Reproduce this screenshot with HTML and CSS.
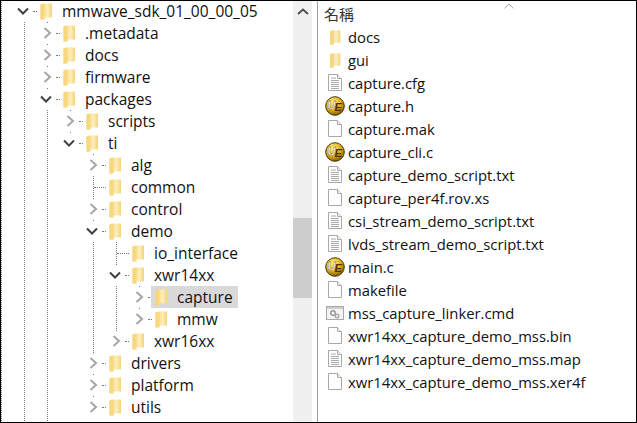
FILE: index.html
```html
<!DOCTYPE html>
<html lang="zh-Hant">
<head>
<meta charset="utf-8">
<title>mmwave_sdk</title>
<link rel="stylesheet" href="styles.css">
</head>
<body>
<svg width="0" height="0" class="defs">
  <defs>
    <linearGradient id="fg" x1="0" x2="1" y1="0" y2="0">
      <stop offset="0" stop-color="#f4d271"/><stop offset=".25" stop-color="#f8dc88"/><stop offset=".6" stop-color="#fdeebb"/><stop offset="1" stop-color="#f5d47a"/>
    </linearGradient>
    <radialGradient id="ue" cx=".4" cy=".3" r=".8">
      <stop offset="0" stop-color="#fff07a"/><stop offset=".55" stop-color="#d9a91c"/><stop offset="1" stop-color="#5c4300"/>
    </radialGradient>
    <symbol id="folder" viewBox="0 0 14 20">
      <path d="M1.500 3.500 4 2.500h9v14H5.500v2h-4z" fill="url(#fg)"/>
      <path d="M1.500 3.500v15h4v-15z" fill="#f6d77f" opacity=".7"/>
    </symbol>
    <symbol id="open" viewBox="0 0 12 12"><path d="M1 3.500 6 8.500l5-5" fill="none" stroke="#404040" stroke-width="2"/></symbol>
    <symbol id="closed" viewBox="0 0 12 12"><path d="M4.500 1 10 6l-5.500 5" fill="none" stroke="#a6a6a6" stroke-width="2"/></symbol>
    <symbol id="doc" viewBox="0 0 14 17"><path d="M.5.5h9l4 4v12H.5z" fill="#fff" stroke="#a8a8a8"/><path d="M9.500.5v4h4" fill="#f2f2f2" stroke="#a8a8a8"/></symbol>
    <symbol id="txt" viewBox="0 0 14 17"><path d="M.5.5h9l4 4v12H.5z" fill="#fff" stroke="#a8a8a8"/><path d="M9.500.5v4h4" fill="#f2f2f2" stroke="#a8a8a8"/><path d="M3 4h5M3 6.500h8M3 8.500h8M3 10.500h8M3 12.500h8M3 14.500h8" stroke="#aaa"/></symbol>
    <symbol id="uedit" viewBox="0 0 20 20"><circle cx="10" cy="10" r="9.300" fill="url(#ue)" stroke="#4a3800"/><text x="2.500" y="12.500" class="ue-u">U</text><text x="9.500" y="15" class="ue-e">E</text></symbol>
    <symbol id="cmd" viewBox="0 0 18 14"><rect x=".5" y=".5" width="17" height="13" fill="#f4f4f4" stroke="#a8a8a8"/><rect x="1" y="1" width="16" height="2" fill="#cfcfcf"/><circle cx="7" cy="7" r="2.300" fill="none" stroke="#999" stroke-width="1.400"/><circle cx="11" cy="10" r="1.800" fill="none" stroke="#aaa" stroke-width="1.400"/></symbol>
  </defs>
</svg>
<main class="window">
  <nav class="tree-pane">
    <div class="tree">
      <svg class="guides" width="293" height="421">
        <path d="M1.500 0V421M24.500 22V421M47.500 22V421M70.500 110V143M93.500 154V407M116.500 242V341M139.500 286V319" />
      </svg>
      <div class="row l0"><svg class="chev"><use href="#open"/></svg><i class="stub"></i><svg class="fld"><use href="#folder"/></svg><span class="lbl">mmwave_sdk_01_00_00_05</span></div>
      <div class="row l1"><svg class="chev"><use href="#closed"/></svg><i class="stub"></i><svg class="fld"><use href="#folder"/></svg><span class="lbl">.metadata</span></div>
      <div class="row l1"><svg class="chev"><use href="#closed"/></svg><i class="stub"></i><svg class="fld"><use href="#folder"/></svg><span class="lbl">docs</span></div>
      <div class="row l1"><svg class="chev"><use href="#closed"/></svg><i class="stub"></i><svg class="fld"><use href="#folder"/></svg><span class="lbl">firmware</span></div>
      <div class="row l1"><svg class="chev"><use href="#open"/></svg><i class="stub"></i><svg class="fld"><use href="#folder"/></svg><span class="lbl">packages</span></div>
      <div class="row l2"><svg class="chev"><use href="#closed"/></svg><i class="stub"></i><svg class="fld"><use href="#folder"/></svg><span class="lbl">scripts</span></div>
      <div class="row l2"><svg class="chev"><use href="#open"/></svg><i class="stub"></i><svg class="fld"><use href="#folder"/></svg><span class="lbl">ti</span></div>
      <div class="row l3"><svg class="chev"><use href="#closed"/></svg><i class="stub"></i><svg class="fld"><use href="#folder"/></svg><span class="lbl">alg</span></div>
      <div class="row l3"><span class="nochev"></span><i class="stub long"></i><svg class="fld"><use href="#folder"/></svg><span class="lbl">common</span></div>
      <div class="row l3"><svg class="chev"><use href="#closed"/></svg><i class="stub"></i><svg class="fld"><use href="#folder"/></svg><span class="lbl">control</span></div>
      <div class="row l3"><svg class="chev"><use href="#open"/></svg><i class="stub"></i><svg class="fld"><use href="#folder"/></svg><span class="lbl">demo</span></div>
      <div class="row l4"><span class="nochev"></span><i class="stub long"></i><svg class="fld"><use href="#folder"/></svg><span class="lbl">io_interface</span></div>
      <div class="row l4"><svg class="chev"><use href="#open"/></svg><i class="stub"></i><svg class="fld"><use href="#folder"/></svg><span class="lbl">xwr14xx</span></div>
      <div class="row l5"><svg class="chev"><use href="#closed"/></svg><i class="stub"></i><svg class="fld sel-fld"><use href="#folder"/></svg><span class="lbl sel">capture</span></div>
      <div class="row l5"><svg class="chev"><use href="#closed"/></svg><i class="stub"></i><svg class="fld"><use href="#folder"/></svg><span class="lbl">mmw</span></div>
      <div class="row l4"><svg class="chev"><use href="#closed"/></svg><i class="stub"></i><svg class="fld"><use href="#folder"/></svg><span class="lbl">xwr16xx</span></div>
      <div class="row l3"><svg class="chev"><use href="#closed"/></svg><i class="stub"></i><svg class="fld"><use href="#folder"/></svg><span class="lbl">drivers</span></div>
      <div class="row l3"><svg class="chev"><use href="#closed"/></svg><i class="stub"></i><svg class="fld"><use href="#folder"/></svg><span class="lbl">platform</span></div>
      <div class="row l3"><svg class="chev"><use href="#closed"/></svg><i class="stub"></i><svg class="fld"><use href="#folder"/></svg><span class="lbl">utils</span></div>
    </div>
    <div class="scrollbar">
      <svg class="up" width="12" height="7" viewBox="0 0 12 7"><path d="M1 6 6 1.500 11 6" fill="none" stroke="#505050" stroke-width="2"/></svg>
      <div class="thumb"></div>
    </div>
  </nav>
  <section class="list-pane">
    <header class="head"><span class="name-col">名稱</span><svg class="sort" width="10" height="6" viewBox="0 0 10 6"><path d="M.5 5.500 5 1l4.500 4.500" fill="none" stroke="#a8a8a8"/></svg></header>
    <ul class="files">
      <li class="file"><span class="ico"><svg class="ff"><use href="#folder"/></svg></span>docs</li>
      <li class="file"><span class="ico"><svg class="ff"><use href="#folder"/></svg></span>gui</li>
      <li class="file"><span class="ico"><svg class="fd"><use href="#txt"/></svg></span>capture.cfg</li>
      <li class="file"><span class="ico"><svg class="fu"><use href="#uedit"/></svg></span>capture.h</li>
      <li class="file"><span class="ico"><svg class="fd"><use href="#doc"/></svg></span>capture.mak</li>
      <li class="file"><span class="ico"><svg class="fu"><use href="#uedit"/></svg></span>capture_cli.c</li>
      <li class="file"><span class="ico"><svg class="fd"><use href="#txt"/></svg></span>capture_demo_script.txt</li>
      <li class="file"><span class="ico"><svg class="fd"><use href="#doc"/></svg></span>capture_per4f.rov.xs</li>
      <li class="file"><span class="ico"><svg class="fd"><use href="#txt"/></svg></span>csi_stream_demo_script.txt</li>
      <li class="file"><span class="ico"><svg class="fd"><use href="#txt"/></svg></span>lvds_stream_demo_script.txt</li>
      <li class="file"><span class="ico"><svg class="fu"><use href="#uedit"/></svg></span>main.c</li>
      <li class="file"><span class="ico"><svg class="fd"><use href="#doc"/></svg></span>makefile</li>
      <li class="file"><span class="ico"><svg class="fc"><use href="#cmd"/></svg></span>mss_capture_linker.cmd</li>
      <li class="file"><span class="ico"><svg class="fd"><use href="#doc"/></svg></span>xwr14xx_capture_demo_mss.bin</li>
      <li class="file"><span class="ico"><svg class="fd"><use href="#txt"/></svg></span>xwr14xx_capture_demo_mss.map</li>
      <li class="file"><span class="ico"><svg class="fd"><use href="#doc"/></svg></span>xwr14xx_capture_demo_mss.xer4f</li>
    </ul>
  </section>
</main>
</body>
</html>
```

FILE: styles.css
```css
* { box-sizing: border-box; }
html, body { margin: 0; padding: 0; background: #000; }
body { width: 637px; height: 423px; overflow: hidden; font-family: "Open Sans", "Noto Sans", sans-serif; color: #111; }
.defs { position: absolute; }
.ue-u { font: italic bold 11px "Liberation Sans", sans-serif; fill: #fff; stroke: #3a2a00; stroke-width: .3px; }
.ue-e { font: italic bold 11px "Liberation Sans", sans-serif; fill: #5a2d00; }
.window { width: 637px; height: 423px; display: flex; background: #fff; border: 1px solid #000; }
.tree-pane { width: 317px; display: flex; border-right: 1px solid #a0a0a0; flex: none; font-size: 15.500px; }
.tree { position: relative; width: 292px; flex: none; overflow: hidden; }
.guides { position: absolute; left: -1px; top: -1px; fill: none; stroke: #777; stroke-dasharray: 1 1; }
.scrollbar { width: 19px; flex: none; background: #f0f0f0; display: flex; flex-direction: column; align-items: center; padding-top: 7px; }
.up { flex: none; }
.thumb { height: 80px; width: 100%; background: #cdcdcd; margin-top: 203px; flex: none; }
.row { position: relative; height: 22px; display: flex; align-items: center; }
.l0 { padding-left: 16px; margin-top: -1px; }
.l1 { padding-left: 39px; }
.l2 { padding-left: 62px; }
.l3 { padding-left: 85px; }
.l4 { padding-left: 108px; }
.l5 { padding-left: 131px; }
.chev { width: 12px; height: 20px; flex: none; display: block; background: #fff; }
.nochev { width: 12px; flex: none; }
.stub { width: 4px; height: 1px; margin: 0 2px 0 4px; flex: none; border-top: 1px dotted #777; }
.stub.long { width: 12px; margin-left: -4px; }
.fld { width: 14px; height: 20px; flex: none; }
.lbl { margin-left: 3px; padding: 0 6px; line-height: 20px; white-space: nowrap; }
.sel { background: #d9d9d9; margin-left: 0; padding: 0 5px 0 9px; line-height: 22px; }
.sel-fld { background: #d9d9d9; width: 17px; height: 22px; padding: 1px 0 1px 3px; margin-left: -3px; }
.list-pane { flex: 1; min-width: 0; position: relative; font-size: 14.800px; }
.head { height: 24px; display: flex; align-items: center; padding-left: 6px; font-family: "Noto Sans CJK TC", "Open Sans", sans-serif; font-size: 15px; color: #333; }
.sort { position: absolute; left: 186px; top: 2px; }
.files { list-style: none; margin: 0; padding: 0; }
.file { height: 23px; display: flex; align-items: center; white-space: nowrap; }
.ico { width: 30px; height: 23px; padding-left: 4px; flex: none; display: flex; align-items: center; justify-content: center; }
.ff { width: 14px; height: 18px; }
.fd { width: 14px; height: 17px; }
.fu { width: 20px; height: 20px; flex: none; }
.fc { width: 18px; height: 14px; }
```
